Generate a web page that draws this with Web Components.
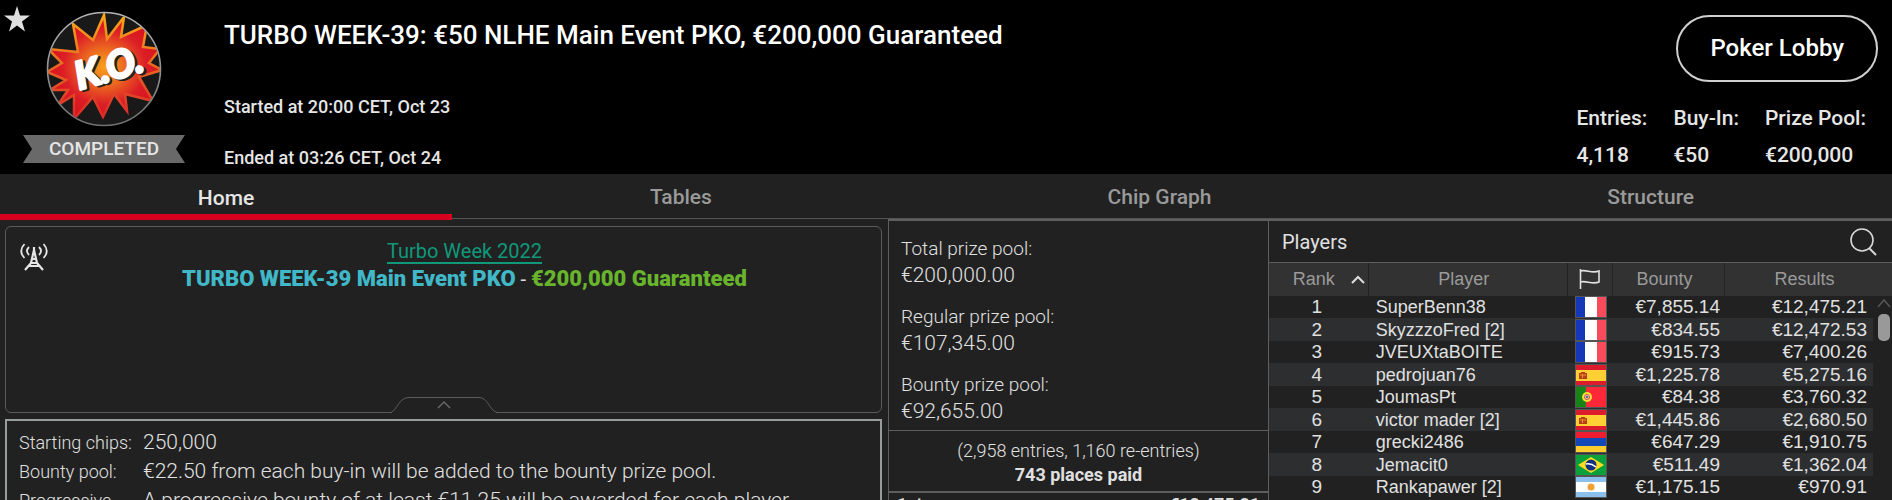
<!DOCTYPE html>
<html lang="en">
<head>
<meta charset="utf-8">
<title>Tournament Lobby</title>
<style>
  body {
    background: #212121;
    color: #e0e0e0;
    font-family: Roboto, "Liberation Sans", sans-serif;
    margin: 0;
  }
</style>
</head>
<body>
<tournament-lobby></tournament-lobby>

<template id="lobby-template">
  <style>
    :host {
      display: flex;
      flex-direction: column;
      height: 100vh;
      overflow: hidden;
    }

    main {
      display: grid;
      flex: 1;
      grid-template-columns: minmax(0, 888fr) minmax(0, 381fr) minmax(0, 623fr);
      min-height: 0;
    }
  </style>
  <lobby-header>
    <span slot="title">TURBO WEEK-39: €50 NLHE Main Event PKO, €200,000 Guaranteed</span>
    <span slot="started">Started at 20:00 CET, Oct 23</span>
    <span slot="ended">Ended at 03:26 CET, Oct 24</span>
    <lobby-stat slot="stats" label="Entries:">4,118</lobby-stat>
    <lobby-stat slot="stats" label="Buy-In:">€50</lobby-stat>
    <lobby-stat slot="stats" label="Prize Pool:">€200,000</lobby-stat>
  </lobby-header>
  <lobby-tabs></lobby-tabs>
  <main>
    <event-info></event-info>
    <prize-info></prize-info>
    <players-panel></players-panel>
  </main>
</template>

<template id="header-template">
  <style>
    :host {
      background: #000;
      box-sizing: border-box;
      display: flex;
      flex-shrink: 0;
      font-weight: 500;
      min-height: 174px;
      position: relative;
    }

    button {
      background: none;
      border: 0;
      color: inherit;
      cursor: pointer;
      font: inherit;
      padding: 0;
    }

    .favourite {
      left: 4px;
      position: absolute;
      top: 5px;
    }

    svg {
      display: block;
    }

    .badge {
      align-items: center;
      display: flex;
      flex-direction: column;
      gap: 8px;
      padding: 11px 39px 0 23px;
    }

    .status {
      background: #696969;
      clip-path: polygon(0 0, 100% 0, calc(100% - 9px) 50%, 100% 100%, 0 100%, 9px 50%);
      color: #e6e6e6;
      font-size: 19px;
      line-height: 28px;
      text-align: center;
      width: 162px;
    }

    .info {
      color: #e6e6e6;
      flex: 1;
      font-size: 18px;
      line-height: 24px;
      padding-top: 21px;
    }

    h1 {
      color: #fff;
      font-size: 26px;
      font-weight: 500;
      line-height: 28px;
      margin: 0 0 46px;
    }

    p {
      margin: 0;
    }

    p + p {
      margin-top: 27px;
    }

    .side {
      align-items: flex-end;
      display: flex;
      flex-direction: column;
      gap: 22px;
      padding: 15px 14px 0 0;
    }

    .lobby {
      border: 2px solid #d0d0d0;
      border-radius: 34px;
      color: #fff;
      font-size: 24px;
      line-height: 63px;
      padding: 0 32px;
    }

    .stats {
      display: flex;
      gap: 26px;
      padding-right: 12px;
    }
  </style>
  <button class="favourite" type="button" aria-label="Favourite">
    <svg width="27" height="28" viewBox="0 0 27 28"><path fill="#e0e0e0" d="M13 1l3 9.500h10l-8 6 3 10-8-6-8 6 3-10-8-6h10z"/></svg>
  </button>
  <div class="badge">
    <svg width="116" height="116" viewBox="0 0 116 116">
      <defs>
        <radialGradient id="fire" cx="50%" cy="50%" r="50%">
          <stop offset="0" stop-color="#f9a11b"/>
          <stop offset=".35" stop-color="#ec6a1f"/>
          <stop offset=".72" stop-color="#dc1e26"/>
          <stop offset="1" stop-color="#d8141c"/>
        </radialGradient>
        <linearGradient id="edge" x1="0" y1="0" x2="0" y2="1">
          <stop offset="0" stop-color="#f9a61a"/>
          <stop offset="1" stop-color="#d8282a"/>
        </linearGradient>
        <linearGradient id="ring" x1="0" y1="0" x2="0" y2="1">
          <stop offset="0" stop-color="#b4b4b4"/>
          <stop offset="1" stop-color="#707070"/>
        </linearGradient>
        <clipPath id="disc"><circle cx="58" cy="58" r="56"/></clipPath>
      </defs>
      <circle cx="58" cy="58" r="57" fill="#191919"/>
      <g clip-path="url(#disc)">
        <path fill="url(#fire)" stroke="url(#edge)" stroke-width="2.500" d="M58 4L61 28 78 6 75 26 101 14 97 36 114 38 103 52 116 59 93 66 107 90 79 83 81 100 68 83 57 106 47 86 28 108 28 84 12 94 22 79 4 79 20 69 1 61 16 52 2 38 32 41 27 13 47 29z"/>
      </g>
      <circle cx="58" cy="58" r="56.500" fill="none" stroke="url(#ring)" stroke-width="1.600"/>
      <g transform="rotate(-16 58 58)" font-family="Liberation Sans Narrow, Lato" font-size="38" font-weight="700" font-style="italic" text-anchor="middle" stroke-linejoin="round">
        <text x="65" y="73" fill="#222" stroke="#222" stroke-width="3">K.O.</text>
        <text x="63" y="71" fill="#fff" stroke="#fff" stroke-width="3">K.O.</text>
      </g>
    </svg>
    <div class="status">COMPLETED</div>
  </div>
  <div class="info">
    <h1><slot name="title"></slot></h1>
    <p><slot name="started"></slot></p>
    <p><slot name="ended"></slot></p>
  </div>
  <div class="side">
    <button class="lobby" type="button">Poker Lobby</button>
    <div class="stats"><slot name="stats"></slot></div>
  </div>
</template>

<template id="stat-template">
  <style>
    :host {
      color: #e6e6e6;
      display: block;
      font-size: 21px;
      line-height: 28px;
    }

    .label {
      margin-bottom: 9px;
    }
  </style>
  <div class="label"></div>
  <slot></slot>
</template>

<template id="tabs-template">
  <style>
    :host {
      display: block;
      flex-shrink: 0;
    }

    nav {
      border-bottom: 1px solid #555;
      display: flex;
      height: 44px;
    }

    a {
      box-sizing: border-box;
      color: #9a9a9a;
      flex: 1 1 auto;
      font-size: 21px;
      font-weight: 500;
      line-height: 46px;
      text-align: center;
      text-decoration: none;
    }

    /* the marker covers the bar's bottom line */
    a.active {
      border-bottom: 6px solid #d8001f;
      color: #e6e6e6;
      height: 46px;
      line-height: 48px;
      z-index: 1;
    }
  </style>
  <nav>
    <a class="active" href="#home">Home</a>
    <a href="#tables">Tables</a>
    <a href="#chips">Chip Graph</a>
    <a href="#structure">Structure</a>
  </nav>
</template>

<template id="event-template">
  <style>
    :host {
      display: flex;
      flex-direction: column;
      gap: 6px;
      padding: 7px 6px 0 5px;
    }

    .banner {
      border: 1px solid #5a5a5a;
      border-radius: 6px;
      box-sizing: border-box;
      display: flex;
      flex-direction: column;
      font-size: 20px;
      height: 187px;
      line-height: 27px;
      position: relative;
      text-align: center;
    }

    .antenna {
      left: 14px;
      position: absolute;
      top: 16px;
    }

    .message {
      padding: 11px 0 0 42px;
    }

    .message a {
      color: #10987a;
      text-underline-offset: 4px;
    }

    .message b {
      font-size: 22px;
      font-weight: 900;
    }

    .event {
      color: #40b8c8;
    }

    .amount {
      color: #68b42c;
    }

    .collapse {
      align-self: center;
      background: none;
      border: 0;
      cursor: pointer;
      margin: auto 0 -1px;
      padding: 0;
    }

    svg {
      display: block;
    }

    dl {
      border: 2px solid #999c9c;
      display: grid;
      flex: 1;
      font-size: 21px;
      font-weight: 300;
      grid-auto-rows: 29px;
      grid-template-columns: 124px 1fr;
      line-height: 29px;
      margin: 0;
      padding: 7px 12px;
    }

    dt {
      font-size: 18px;
    }

    dd {
      margin: 0;
    }
  </style>
  <div class="banner">
    <svg class="antenna" width="28" height="29" viewBox="0 0 28 29" fill="none" stroke="#e6e6e6" stroke-width="1.800">
      <path d="M4.500 1Q-2 8 4.500 15M9 4Q5 8 9 12M23.500 1Q30 8 23.500 15M19 4Q23 8 19 12"/>
      <path stroke-width="2.200" d="M14 4v4M14 7L11 20 5 27M14 7l3 13 6 7M12 16h4M10 20h8M9 23h10"/>
    </svg>
    <div class="message">
      <a href="#turbo-week">Turbo Week 2022</a><br>
      <b class="event">TURBO WEEK-39 Main Event PKO</b> - <b class="amount">€200,000 Guaranteed</b>
    </div>
    <button class="collapse" type="button" aria-label="Collapse">
      <svg width="106" height="17" viewBox="0 0 106 17" fill="none">
        <path fill="#212121" d="M1 15h104v2H1z"/>
        <path stroke="#5a5a5a" d="M0 16.500C6 14 8 1.500 18 1.500h70C97 1.500 98 14 106 16.500"/>
        <path stroke="#666" stroke-width="1.500" d="M47 12l6-6 6 6"/>
      </svg>
    </button>
  </div>
  <dl>
    <dt>Starting chips:</dt><dd>250,000</dd>
    <dt>Bounty pool:</dt><dd>€22.50 from each buy-in will be added to the bounty prize pool.</dd>
    <dt>Progressive</dt><dd>A progressive bounty of at least €11.25 will be awarded for each player</dd>
  </dl>
</template>

<template id="prize-template">
  <style>
    :host {
      border: solid #5e5e5e;
      border-width: 2px 1px 0;
      display: block;
      font-weight: 300;
    }

    dl {
      font-size: 19px;
      line-height: 27px;
      margin: 0;
      padding: 14px 12px 5px;
    }

    dt:not(:first-child) {
      margin-top: 14px;
    }

    dd {
      font-size: 21px;
      margin: 0;
    }

    .places {
      border: solid #5e5e5e;
      border-width: 1px 0 2px;
      font-size: 18px;
      line-height: 24px;
      padding: 8px 0 4px;
      text-align: center;
    }

    .places b {
      display: block;
      font-weight: 700;
    }

    .payout {
      display: flex;
      font-size: 18px;
      font-weight: 500;
      justify-content: space-between;
      line-height: 24px;
      padding: 0 8px;
    }
  </style>
  <dl>
    <dt>Total prize pool:</dt><dd>€200,000.00</dd>
    <dt>Regular prize pool:</dt><dd>€107,345.00</dd>
    <dt>Bounty prize pool:</dt><dd>€92,655.00</dd>
  </dl>
  <div class="places">(2,958 entries, 1,160 re-entries)<b>743 places paid</b></div>
  <div class="payout"><span>1st</span><span>€12,475.21</span></div>
</template>

<template id="players-template">
  <style>
    :host {
      border-top: 2px solid #5e5e5e;
      display: block;
      min-height: 0;
      overflow: hidden;
    }

    .top {
      align-items: center;
      border-bottom: 1px solid #5e5e5e;
      display: flex;
      height: 41px;
      justify-content: space-between;
      padding: 0 15px 0 13px;
    }

    h2 {
      font-size: 20px;
      font-weight: 400;
      margin: 0;
    }

    button {
      background: none;
      border: 0;
      cursor: pointer;
      padding: 0;
    }

    svg {
      display: block;
    }

    table {
      border-collapse: separate;
      border-spacing: 0;
      font-family: "Liberation Sans", Arial, sans-serif;
      font-size: 19px;
      table-layout: fixed;
      width: 100%;
    }

    th {
      background: #323232;
      border-right: 1px solid #222;
      color: #9a9a9a;
      font-size: 18px;
      font-weight: 400;
      height: 33px;
      line-height: 31px;
      padding: 0;
    }

    th.text {
      padding-right: 8px;
    }

    th:last-child {
      border: 0;
    }

    .sort {
      align-items: center;
      display: flex;
      gap: 16px;
      justify-content: flex-end;
      padding-right: 3px;
    }

    th svg {
      margin: 0 auto;
    }

    .sort svg {
      margin: 0;
    }

    td {
      height: 22px;
      line-height: 22px;
      padding: 0;
      white-space: nowrap;
    }

    /* rows share 45px in pairs */
    tr:nth-child(even) td {
      background: #2c2e30;
      height: 23px;
    }

    .rank {
      padding-right: 4px;
      text-align: center;
    }

    .name {
      font-size: 18px;
      padding-left: 7px;
    }

    .flag {
      padding: 0 6px 0 7px;
    }

    .flag svg {
      height: 22px;
      outline: 1px solid #555;
      outline-offset: -1px;
      width: 32px;
    }

    .money {
      text-align: right;
    }

    .bounty {
      padding-right: 5px;
    }

    .result {
      padding-right: 6px;
    }

    .scroll {
      vertical-align: top;
    }
  </style>
  <div class="top">
    <h2>Players</h2>
    <button type="button" aria-label="Search players">
      <svg width="27" height="28" viewBox="0 0 27 28" fill="none" stroke="#d8d8d8"><circle cx="12" cy="12" r="11" stroke-width="1.600"/><path stroke-width="2" d="M19 20l7 7"/></svg>
    </button>
  </div>
  <table>
    <colgroup>
      <col style="width: 16%"><col><col style="width: 45px"><col style="width: 18%"><col style="width: 148px"><col style="width: 19px">
    </colgroup>
    <thead>
      <tr>
        <th><span class="sort">Rank<svg width="14" height="9" viewBox="0 0 14 9" fill="none" stroke="#ddd" stroke-width="2"><path d="M1 8l6-6 6 6"/></svg></span></th>
        <th class="text">Player</th>
        <th aria-label="Country"><svg width="21" height="21" viewBox="0 0 21 21" fill="none" stroke="#e0e0e0" stroke-width="1.600"><path d="M1.500 0v20M1.500 2C7 0 13 5 20 2v11C13 16 7 11 1.500 13"/></svg></th>
        <th class="text">Bounty</th>
        <th class="text" colspan="2">Results</th>
      </tr>
    </thead>
    <tbody></tbody>
  </table>
</template>

<script>
const flags = {
  fr: '<path fill="#1438b8" d="M0 0h10v22H0z"/><path fill="#fff" d="M10 0h12v22H10z"/><path fill="#f84c5c" d="M22 0h10v22H22z"/>',
  es: '<path fill="#dc1c2c" d="M0 0h32v22H0z"/><path fill="#ffd034" d="M0 6h32v11H0z"/><path fill="#b84018" d="M4 9h2V8h4v1h2v6H4z"/><path stroke="#e89030" d="M5 11h6M7.500 10v4"/>',
  pt: '<path fill="#ff2838" d="M0 0h32v22H0z"/><path fill="#188418" d="M0 0h11v22H0z"/><circle cx="12" cy="11" r="5" fill="#f0e030"/><circle cx="12" cy="11" r="3" fill="#e8c8b0"/><circle cx="12" cy="11" r="2.500" fill="none" stroke="#d85040"/><path fill="#5070b0" d="M11 10h2v2h-2z"/>',
  am: '<path fill="#f01c30" d="M0 0h32v7H0z"/><path fill="#1448b8" d="M0 7h32v8H0z"/><path fill="#ffcc30" d="M0 15h32v7H0z"/>',
  br: '<path fill="#0ca03c" d="M0 0h32v22H0z"/><path fill="#ffdc20" d="M3 11l13-8 13 8-13 8z"/><circle cx="16" cy="11" r="5.500" fill="#103080"/><path fill="none" stroke="#fff" stroke-width="1.500" d="M11 10q5-1 10 3"/>',
  ar: '<path fill="#8cc0ec" d="M0 0h32v22H0z"/><path fill="#fff" d="M0 6h32v10H0z"/><circle cx="16" cy="11" r="3.500" fill="#f0a030"/>'
};

const players = [
  ['SuperBenn38', 'fr', '€7,855.14', '€12,475.21'],
  ['SkyzzzoFred [2]', 'fr', '€834.55', '€12,472.53'],
  ['JVEUXtaBOITE', 'fr', '€915.73', '€7,400.26'],
  ['pedrojuan76', 'es', '€1,225.78', '€5,275.16'],
  ['JoumasPt', 'pt', '€84.38', '€3,760.32'],
  ['victor mader [2]', 'es', '€1,445.86', '€2,680.50'],
  ['grecki2486', 'am', '€647.29', '€1,910.75'],
  ['Jemacit0', 'br', '€511.49', '€1,362.04'],
  ['Rankapawer [2]', 'ar', '€1,175.15', '€970.91']
];

// Base for every element here: clones its <template> into an open shadow root
class TemplateElement extends HTMLElement {
  constructor(id) {
    super();
    const shadow = this.attachShadow({mode: 'open'});
    shadow.appendChild(document.getElementById(id).content.cloneNode(true));
  }
}

class LobbyStat extends TemplateElement {
  constructor() {
    super('stat-template');
  }

  connectedCallback() {
    this.shadowRoot.querySelector('.label').textContent = this.getAttribute('label');
  }
}

class LobbyHeader extends TemplateElement {
  constructor() {
    super('header-template');
  }
}

class LobbyTabs extends TemplateElement {
  constructor() {
    super('tabs-template');
  }
}

class EventInfo extends TemplateElement {
  constructor() {
    super('event-template');
  }
}

class PrizeInfo extends TemplateElement {
  constructor() {
    super('prize-template');
  }
}

class PlayersPanel extends TemplateElement {
  constructor() {
    super('players-template');
  }

  connectedCallback() {
    this.data = players;
  }

  /**
   * @param {Array} data - rows of [name, flag, bounty, result]
   */
  set data(data) {
    if (!data) return;

    // the scrollbar sits in one tall cell beside all the rows
    const scroll = `<td class="scroll" rowspan="${data.length}">
      <svg width="19" height="50" viewBox="0 0 19 50"><path fill="none" stroke="#555" stroke-width="1.500" d="M5 11l6-7 6 7"/><rect x="5" y="18" width="12" height="27" rx="5" fill="#999"/></svg>
    </td>`;

    this.shadowRoot.querySelector('tbody').innerHTML = data.map(([name, flag, bounty, result], i) => `
      <tr>
        <td class="rank">${i + 1}</td>
        <td class="name">${name}</td>
        <td class="flag"><svg viewBox="0 0 32 22" preserveAspectRatio="none">${flags[flag]}</svg></td>
        <td class="money bounty">${bounty}</td>
        <td class="money result">${result}</td>
        ${i === 0 ? scroll : ''}
      </tr>`).join('');
  }
}

class TournamentLobby extends TemplateElement {
  constructor() {
    super('lobby-template');
  }
}

customElements.define('lobby-stat', LobbyStat);
customElements.define('lobby-header', LobbyHeader);
customElements.define('lobby-tabs', LobbyTabs);
customElements.define('event-info', EventInfo);
customElements.define('prize-info', PrizeInfo);
customElements.define('players-panel', PlayersPanel);
customElements.define('tournament-lobby', TournamentLobby);
</script>
</body>
</html>
